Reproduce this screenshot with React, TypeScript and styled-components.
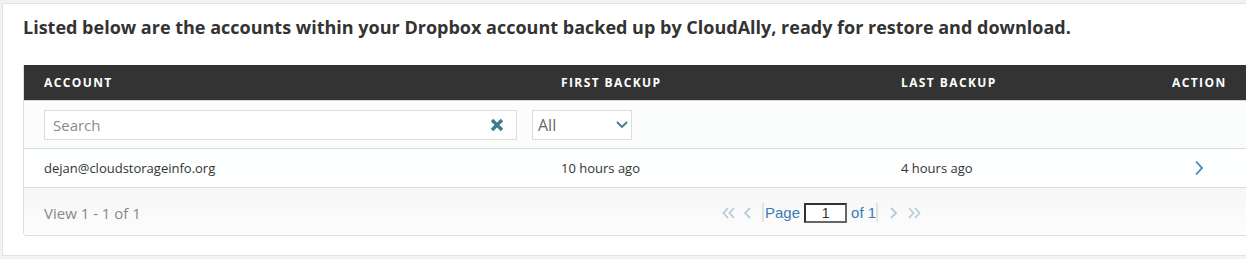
import React from 'react'
import styled, { createGlobalStyle } from 'styled-components'

const Global = createGlobalStyle`
	html, body {
		margin: 0;
		padding: 0;
		background: #f2f2f2;
		overflow: hidden;
		font-family: "Open Sans", "Liberation Sans", sans-serif;
	}
`

const Page = styled.div`
	padding: 3px 0 0 2px;
	width: 1300px;
`
const Panel = styled.div`
	background: #fff;
	border: 1px solid #e2e2e2;
	width: 1270px;
	height: 253px;
	box-sizing: border-box;
	padding: 11px 0 0 20px;
`
const Title = styled.h1`
	margin: 0 0 26px;
	font-size: 18px;
	font-weight: 700;
	line-height: 24px;
	color: #333;
`
const Grid = styled.div`
	width: 1240px;
	border: 1px solid #ddd;
	border-top: none;
	border-radius: 0 0 4px 4px;
	overflow: hidden;
`
const Row = styled.div<{ $height: number; $bg?: string }>`
	display: grid;
	grid-template-columns: 517px 340px 271px 1fr;
	align-items: center;
	height: ${p => p.$height}px;
	background: ${p => p.$bg || '#fdfefe'};
	border-bottom: 1px solid #dcdcdc;
	box-sizing: border-box;
`
const Head = styled(Row)`
	background: #333;
	border-bottom: 1px solid #d6d6d6;
`
const HeadCell = styled.div`
	padding-left: 20px;
	color: #fff;
	font-size: 12px;
	font-weight: 700;
	letter-spacing: 1.4px;
	text-transform: uppercase;
`
const Cell = styled.div`
	padding-left: 20px;
	font-size: 13px;
	color: #333;
`
const ActionCell = styled.div`
	padding-left: 42px;
	display: flex;
	align-items: center;
`
const Filters = styled.div`
	grid-column: 1 / -1;
	display: flex;
	align-items: center;
	gap: 15px;
	padding-left: 20px;
`
const SearchBox = styled.div`
	width: 473px;
	height: 30px;
	box-sizing: border-box;
	border: 1px solid #ddd;
	background: #fff;
	display: flex;
	align-items: center;
	padding: 0 12px 0 8px;
`
const SearchInput = styled.input`
	flex: 1;
	border: none;
	outline: none;
	background: transparent;
	font-family: "Open Sans", sans-serif;
	font-size: 15px;
	color: #333;
	padding: 0;
	&::placeholder { color: #8a8a8a; }
`
const Select = styled.div`
	width: 100px;
	height: 30px;
	box-sizing: border-box;
	border: 1px solid #ddd;
	background: #fff;
	display: flex;
	align-items: center;
	justify-content: space-between;
	padding: 0 3px 0 5px;
	font-size: 16px;
	color: #666;
`
const Footer = styled.div`
	height: 47px;
	padding-top: 2px;
	box-sizing: border-box;
	display: flex;
	align-items: center;
	background: linear-gradient(#f6f6f6, #fdfdfd);
`
const ViewInfo = styled.div`
	width: 697px;
	padding-left: 20px;
	box-sizing: border-box;
	font-size: 15px;
	color: #888;
`
const Pager = styled.div`
	display: flex;
	align-items: center;
	font-family: "Liberation Sans", Arial, sans-serif;
	font-size: 15px;
	color: #3b7bb8;
`
const PagerIcons = styled.div<{ $side: 'l' | 'r' }>`
	display: flex;
	align-items: center;
	gap: 7px;
	padding: ${p => (p.$side === 'l' ? '0 7px 0 1px' : '0 0 0 9px')};
`
const Sep = styled.span`
	width: 2px;
	height: 19px;
	background: #e2e2e2;
	margin: 0 1px 0 0;
`
const PageInput = styled.div`
	width: 43px;
	height: 20px;
	box-sizing: border-box;
	border: 2px solid #333;
	border-right-color: #666;
	border-bottom-color: #666;
	background: #fff;
	margin: 0 4px 0 4px;
	text-align: center;
	line-height: 16px;
	font-size: 14px;
	color: #333;
`

const Chev = ({ dir, color, size = 10 }: { dir: 'l' | 'r' | 'd'; color: string; size?: number }) => {
	const d = dir === 'l' ? 'M7 1 L2 6 L7 11' : dir === 'r' ? 'M3 1 L8 6 L3 11' : 'M1 3 L6 8 L11 3'
	return (
		<svg width={size} height={size} viewBox="0 0 12 12">
			<path d={d} fill="none" stroke={color} strokeWidth="1.8" />
		</svg>
	)
}
const Double = ({ dir, color }: { dir: 'l' | 'r'; color: string }) => (
	<svg width="14" height="12" viewBox="0 0 14 12">
		{dir === 'l' ? (
			<path d="M6 1 L1.5 6 L6 11 M12 1 L7.5 6 L12 11" fill="none" stroke={color} strokeWidth="1.8" />
		) : (
			<path d="M2 1 L6.5 6 L2 11 M8 1 L12.5 6 L8 11" fill="none" stroke={color} strokeWidth="1.8" />
		)}
	</svg>
)

export default function App() {
	const pale = '#b4cdd9'
	return (
		<Page>
			<Global />
			<Panel>
				<Title>Listed below are the accounts within your Dropbox account backed up by CloudAlly, ready for restore and download.</Title>
				<Grid>
					<Head $height={36}>
						<HeadCell>Account</HeadCell>
						<HeadCell>First Backup</HeadCell>
						<HeadCell>Last Backup</HeadCell>
						<HeadCell>Action</HeadCell>
					</Head>
					<Row $height={48} $bg="#fbfdfd">
						<Filters>
							<SearchBox>
								<SearchInput placeholder="Search" />
								<svg width="14" height="14" viewBox="0 0 14 14">
									<path d="M2 2 L12 12 M12 2 L2 12" stroke="#3b7d8e" strokeWidth="3.4" />
								</svg>
							</SearchBox>
							<Select>
								<span>All</span>
								<Chev dir="d" color="#3b7d8e" size={12} />
							</Select>
						</Filters>
					</Row>
					<Row $height={39}>
						<Cell>dejan@cloudstorageinfo.org</Cell>
						<Cell>10 hours ago</Cell>
						<Cell>4 hours ago</Cell>
						<ActionCell>
							<svg width="10" height="16" viewBox="0 0 10 16">
								<path d="M2 1.5 L8 8 L2 14.5" fill="none" stroke="#3a87b5" strokeWidth="1.8" />
							</svg>
						</ActionCell>
					</Row>
					<Footer>
						<ViewInfo>View 1 - 1 of 1</ViewInfo>
						<Pager>
							<PagerIcons $side="l">
								<Double dir="l" color={pale} />
								<Chev dir="l" color={pale} size={12} />
							</PagerIcons>
							<Sep />
							<span>Page</span>
							<PageInput>1</PageInput>
							<span>of 1</span>
							<Sep />
							<PagerIcons $side="r">
								<Chev dir="r" color={pale} size={12} />
								<Double dir="r" color={pale} />
							</PagerIcons>
						</Pager>
					</Footer>
				</Grid>
			</Panel>
		</Page>
	)
}
